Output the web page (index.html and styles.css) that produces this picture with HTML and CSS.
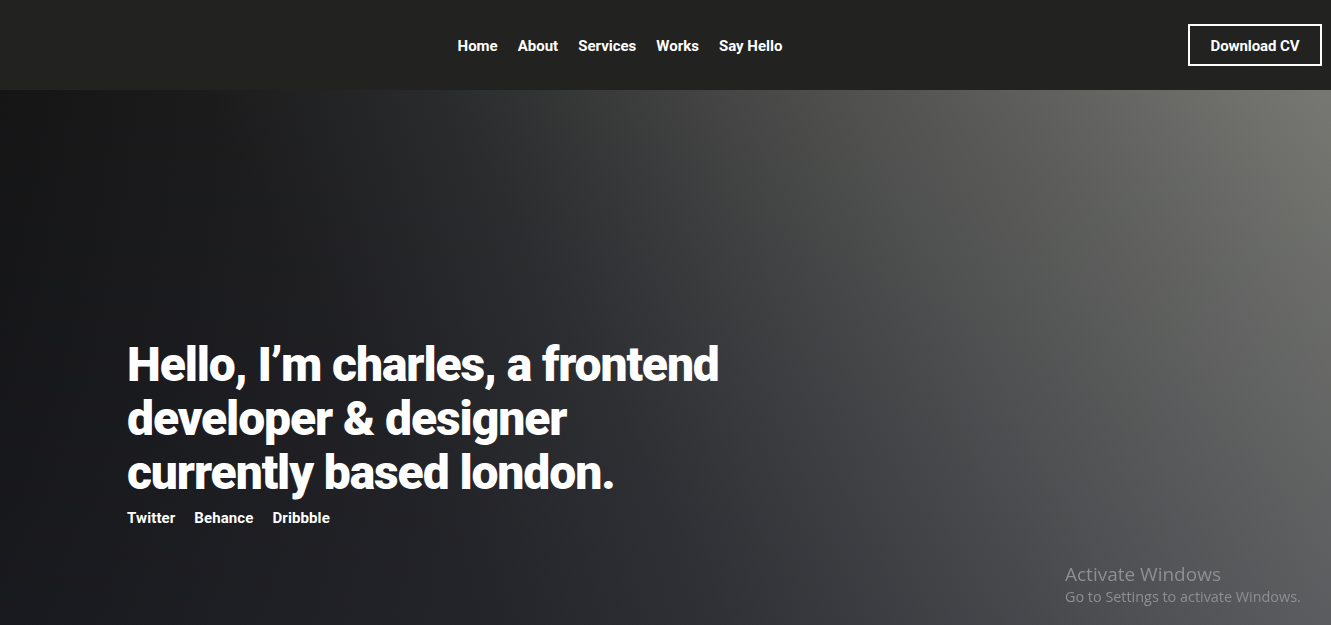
FILE: index.html
```html
<!DOCTYPE html>
<html lang="en">
<head>
<meta charset="utf-8">
<title>Charles — Frontend Developer</title>
<link rel="stylesheet" href="styles.css">
</head>
<body>
<header class="topbar">
  <div class="brand"></div>
  <nav class="menu">
    <a href="#">Home</a>
    <a href="#">About</a>
    <a href="#">Services</a>
    <a href="#">Works</a>
    <a href="#">Say Hello</a>
  </nav>
  <div class="actions">
    <a class="cv-btn" href="#">Download CV</a>
  </div>
</header>
<main class="hero">
  <div class="hero-inner">
    <h1 class="headline">Hello, I’m charles, a frontend<br>developer &amp; designer<br>currently based london.</h1>
    <ul class="socials">
      <li><a href="#">Twitter</a></li>
      <li><a href="#">Behance</a></li>
      <li><a href="#">Dribbble</a></li>
    </ul>
  </div>
</main>
<div class="watermark">
  <div class="wm-title">Activate Windows</div>
  <div class="wm-sub">Go to Settings to activate Windows.</div>
</div>
</body>
</html>
```

FILE: styles.css
```css
* { box-sizing: border-box; }
html, body { margin: 0; padding: 0; height: 100%; }
body {
  font-family: Roboto, "Liberation Sans", Arial, sans-serif;
  background: #0f0f10;
  color: #fff;
  overflow: hidden;
}
a { color: #fff; text-decoration: none; }

.topbar {
  height: 90px;
  background: #222221;
  display: grid;
  grid-template-columns: 0.848fr auto 1fr;
  align-items: center;
  padding: 0 9px 0 0;
}
.menu {
  display: flex;
  gap: 20px;
  font-size: 15px;
  font-weight: 700;
  letter-spacing: 0;
  padding-top: 2px;
}
.actions { display: flex; justify-content: flex-end; }
.cv-btn {
  display: inline-flex;
  align-items: center;
  justify-content: center;
  width: 134px;
  height: 42px;
  border: 2px solid #fff;
  font-size: 15px;
  font-weight: 700;
  letter-spacing: -0.1px;
  padding-top: 2px;
}

.hero {
  height: calc(100% - 90px);
  background:
    linear-gradient(to bottom, rgba(40,42,50,0) 0%, rgba(70,74,100,0.2) 100%),
    linear-gradient(62deg, #0d0d0d 0%, #1b1b1c 30%, #2a2b2c 45%, #50514f 70%, #777872 100%);
  display: flex;
  align-items: flex-end;
  padding: 0 0 98px 127px;
}
.headline {
  margin: 0;
  font-size: 48px;
  line-height: 54px;
  font-weight: 900;
  letter-spacing: -1.1px;
}
.socials {
  list-style: none;
  margin: 9px 0 0;
  padding: 0;
  display: flex;
  gap: 19px;
  font-size: 15px;
  font-weight: 700;
  letter-spacing: 0.1px;
}

.watermark {
  position: fixed;
  left: 1065px;
  top: 563px;
  font-family: "Open Sans", "Noto Sans", sans-serif;
  color: #8e8f93;
}
.wm-title { font-size: 19px; line-height: 23px; font-weight: 400; }
.wm-sub { font-size: 14.4px; line-height: 22px; }
```
